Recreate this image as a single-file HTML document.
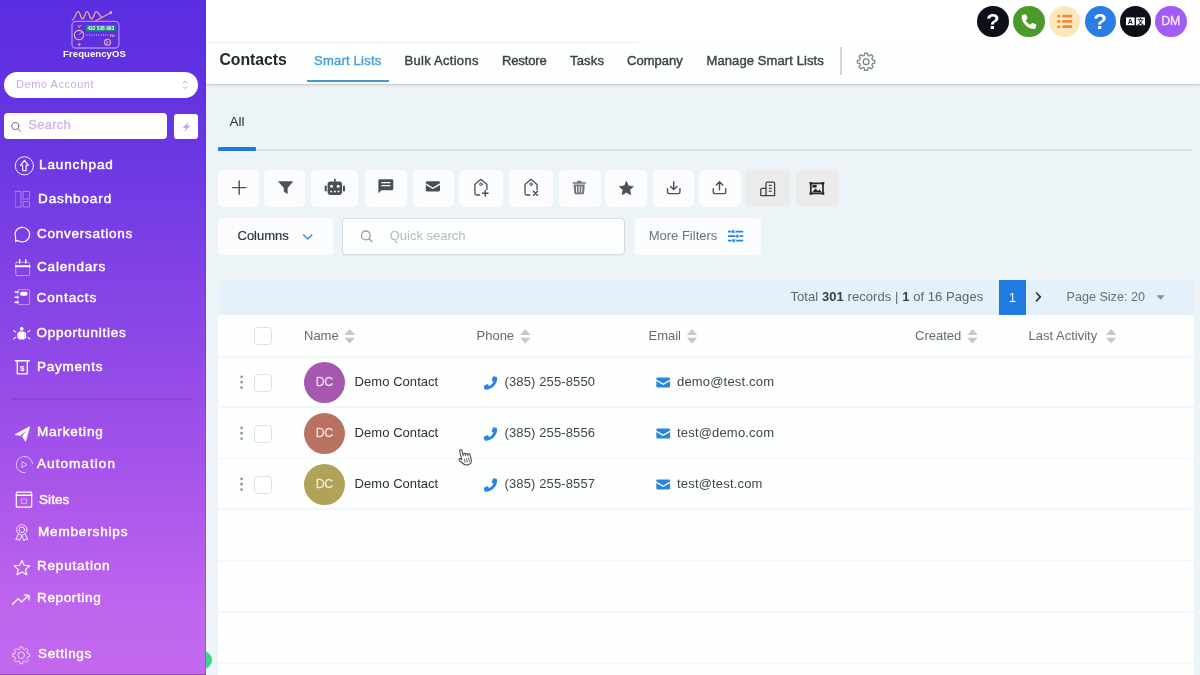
<!DOCTYPE html>
<html lang="en">
<head>
<meta charset="utf-8">
<title>Contacts - FrequencyOS</title>
<style>
*{box-sizing:border-box;margin:0;padding:0}
html,body{width:1200px;height:675px;overflow:hidden;background:#ecf4f7;font-family:"Liberation Sans",sans-serif;}
.abs{position:absolute}
#app{position:relative;width:1200px;height:675px;overflow:hidden;background:#ecf4f7;will-change:transform}
/* sidebar */
#side{position:absolute;left:0;top:0;width:206px;height:675px;background:linear-gradient(180deg,#5a2de0 0%,#6a37e2 22%,#8a46e6 48%,#a654ea 70%,#bf65ee 90%,#c368ee 100%);z-index:5}
#side .nav{position:absolute;color:#fff;font-weight:400;-webkit-text-stroke:.45px #fff;font-size:13.5px;letter-spacing:.35px;line-height:16px;white-space:nowrap}
#side svg{position:absolute;overflow:visible}
.pill{position:absolute;left:4px;top:72.3px;width:194px;height:26px;border-radius:13px;background:#fff}
.pill span{position:absolute;left:12px;top:4.8px;font-size:11px;line-height:14px;color:#c9a9f3;letter-spacing:.55px;font-weight:400}
.sbox{position:absolute;left:4px;top:113.3px;width:163px;height:26px;border-radius:4px;background:#fff}
.sbox span{position:absolute;left:24.3px;top:4.2px;font-size:13px;line-height:16px;color:#cdb0f2;letter-spacing:.25px;-webkit-text-stroke:.3px #cdb0f2}
.bolt{position:absolute;left:174px;top:114px;width:24px;height:25px;border-radius:3px;background:#fff}
/* top */
#top{position:absolute;left:206px;top:0;width:994px;height:43px;background:#fff}
.circ{position:absolute;top:5.5px;width:31.5px;height:31.5px;border-radius:50%}
#hdr{position:absolute;left:206px;top:43px;width:994px;height:40.8px;background:#fdfefe;box-shadow:0 1.5px 1.5px rgba(100,108,112,.2),0 3px 3px rgba(100,108,112,.06)}
#hdr .t{position:absolute;top:9.5px;font-size:13px;line-height:16px;font-weight:400;-webkit-text-stroke:.4px;color:#3c4149;white-space:nowrap}
/* content */
.btn{position:absolute;top:170.3px;height:37px;background:#fafcfd;border-radius:5px}
.btn svg{position:absolute;left:50%;top:50%}
#tbl{position:absolute;left:218px;top:315px;width:976px;height:360px;background:#fdfefe;border-radius:4px 4px 0 0}
.sep{position:absolute;left:0;width:976px;height:1.5px;background:#f3f6f7}
.th{position:absolute;top:13.1px;font-size:13px;line-height:16px;color:#666b72;white-space:nowrap}
.cb{position:absolute;width:18px;height:18px;border:1.5px solid #dde1e5;border-radius:4px;background:#fff}
.av{position:absolute;width:41px;height:41px;border-radius:50%;color:rgba(255,255,255,.74);-webkit-text-stroke:.3px rgba(255,255,255,.5);font-size:12.4px;line-height:41.5px;text-align:center;letter-spacing:-.3px;text-indent:-.3px}
.td{position:absolute;font-size:13px;line-height:16px;color:#2b2f36;white-space:nowrap}
</style>
</head>
<body>
<div id="app">

<!-- SIDEBAR -->
<div id="side">
  <div class="abs" style="left:63px;top:48px;width:63px;text-align:center;font-size:9.5px;font-weight:700;color:#fff;line-height:12px;letter-spacing:.1px">FrequencyOS</div>
  <div class="pill"><span>Demo Account</span></div>
  <div class="sbox"><span>Search</span></div>
  <div class="bolt"></div>

<svg class="abs" style="left:0;top:0" width="206" height="675" viewBox="0 0 206 675" fill="none" stroke="#fff" stroke-width="1.1" stroke-linecap="round" stroke-linejoin="round">
  <!-- logo -->
  <g stroke="#eeaa94" stroke-width="1.25">
    <path d="M72.300 19.900 C74.500 19.900 76 11.700 78.200 11.700 C80.400 11.700 80.400 18.900 82.600 18.900 C84.800 18.900 84.800 11.700 87 11.700 C89.200 11.700 89.500 18.900 91.700 18.900 C93.900 18.900 94.100 11.700 96.300 11.700 C98.300 11.700 99.500 15 101.400 17.200"/>
    <path d="M95.500 21 L110.600 12.700" stroke-width="1.150"/>
    <circle cx="110.800" cy="12.600" r=".9" fill="#eeaa94"/>
  </g>
  <rect x="72" y="21.400" width="46.900" height="26.600" rx="3.600" stroke="#a68dff" stroke-width="1.300"/>
  <rect x="86" y="25.100" width="29.600" height="6.100" rx=".6" fill="#1c8b80" stroke="none"/>
  <text x="100.800" y="30" font-family="Liberation Sans,sans-serif" font-size="4.800" font-weight="700" fill="#e9fff8" stroke="none" text-anchor="middle">432 528 963</text>
  <circle cx="79" cy="35" r="4.700" stroke="#edb6ae" stroke-width="1.150"/>
  <path d="M79.400 34.600 L82 32" stroke="#edb6ae" stroke-width="1"/>
  <path d="M78.200 25.400 L79.400 27.800 L80.600 25.400" stroke="#eeaa94" stroke-width=".9"/>
  <path d="M86.600 35 h21.600" stroke="#cbb2ff" stroke-width="1.500" stroke-dasharray=".8 1.550" stroke-linecap="butt"/>
  <text x="109.700" y="37.100" font-family="Liberation Sans,sans-serif" font-size="4.300" font-weight="700" fill="#eeaa94" stroke="none">Hz</text>
  <circle cx="107.500" cy="42.200" r="3" stroke="#edb6ae" stroke-width="1.050"/>
  <path d="M107.500 42.200 L105.900 40.300 M107.500 42.200 L106.300 44.300" stroke="#edb6ae" stroke-width=".9"/>
  <path d="M79.300 43.300 V45.700 M78.100 44.500 H80.500" stroke="#eeaa94" stroke-width=".9"/>

  <!-- pill chevrons -->
  <path d="M183 83 L185 81 L187 83 M183 86.6 L185 88.6 L187 86.6" stroke="#c9a9f3" stroke-width="1"/>
  <!-- search icon -->
  <circle cx="15.3" cy="126" r="3.6" stroke="#6f7278" stroke-width="1"/>
  <path d="M18 128.8 L20.6 131.4" stroke="#6f7278" stroke-width="1"/>
  <!-- bolt -->
  <path d="M188.8 121.7 L182.5 127.7 L186 127.7 L184 131.8 L190.5 125.8 L187 125.8 Z" fill="#bb9ef3" stroke="none"/>

  <!-- launchpad -->
  <circle cx="24.4" cy="165.8" r="9.1" stroke-width="1" opacity=".92"/>
  <path d="M24.4 160.3 L20.4 165.3 L22.7 165.3 L22.7 170.8 L26.1 170.8 L26.1 165.3 L28.4 165.3 Z" stroke-width="1.1"/>
  <!-- dashboard -->
  <g opacity=".38" stroke-width="1">
    <rect x="15.5" y="191.5" width="5.5" height="15.5"/>
    <rect x="23.5" y="191.5" width="6" height="7.5"/>
    <rect x="23.5" y="201.5" width="6" height="5.5"/>
  </g>
  <!-- conversations -->
  <path d="M16.6 240.6 L15.6 241.6 L15.6 237.6 A7.3 7.3 0 1 1 18.6 240.9 Z" stroke-width="1.2"/>
  <!-- calendars -->
  <rect x="15.8" y="262.3" width="13.8" height="13.3" rx="1" stroke-width="1" opacity=".5"/>
  <path d="M15.8 266.2 H29.6" stroke-width="1.9"/>
  <path d="M19.6 259.8 V263 M25.8 259.8 V263" stroke-width="1.4"/>
  <!-- contacts -->
  <rect x="17.8" y="289.6" width="11.8" height="15" rx="1.3" stroke-width="1" opacity=".45"/>
  <path d="M15.2 292 H18.2 M15.2 297.2 H18.2 M15.2 302.4 H18.2" stroke-width="1.6"/>
  <rect x="20" y="291.8" width="7.6" height="4" rx="1.8" fill="#fff" stroke="none"/>
  <!-- opportunities -->
  <g stroke="none" fill="#fff">
    <circle cx="21.7" cy="328.800" r="1.9"/>
    <path d="M18.800 331.500 H24.600 V339.400 H18.800 Z"/>
    <path d="M17.300 333 L18.800 332 V338.600 L17.300 338 Z M26.100 333 L24.600 332 V338.600 L26.100 338 Z"/>
  </g>
  <path d="M13.6 330.6 L15.6 332 M29.8 330.6 L27.8 332 M13.6 338.8 L15.6 337.4 M29.800 338.800 L27.800 337.400" stroke-width="1.2" opacity=".85"/>
  <!-- payments -->
  <path d="M15.2 360.8 H29.2" stroke-width="1.5"/>
  <path d="M17.3 361 V373.8 H27.3 V361" stroke-width="1.3"/>
  <text x="22.3" y="370.8" font-family="Liberation Sans,sans-serif" font-size="8" font-weight="700" fill="#fff" stroke="none" text-anchor="middle">$</text>
  <!-- marketing -->
  <path d="M15.2 434.4 L29.8 426.6 L25.6 441.4 L22.4 436.6 L27 429.8 L20.2 435.6 Z" fill="#fff" stroke="#fff" stroke-width=".6"/>
  <!-- automation -->
  <path d="M32.6 463.8 A8.2 8.2 0 1 0 25.2 472.8" stroke-width="1" opacity=".65"/>
  <path d="M22.3 461.8 L27 464.6 L22.3 467.4 Z" stroke-width=".9" opacity=".7"/>
  <!-- sites -->
  <rect x="16.3" y="492.2" width="15.4" height="15" rx=".8" stroke-width="1.2"/>
  <path d="M16.3 495.2 H31.7" stroke-width="1.4"/>
  <rect x="21.8" y="499" width="4.6" height="4.6" stroke-width=".9" opacity=".55"/>
  <!-- memberships -->
  <circle cx="21.8" cy="529.8" r="5.2" stroke-width="1" opacity=".8"/>
  <circle cx="21.8" cy="529.8" r="2.8" stroke-width="1" opacity=".9"/>
  <path d="M18.4 534 L15.8 539.6 L18.3 539 L19.6 541 L21.8 535.4 L24 541 L25.3 539 L27.8 539.6 L25.2 534" stroke-width="1" opacity=".85"/>
  <!-- reputation -->
  <path d="M21.9 560.2 L24.1 565.3 L29.7 565.8 L25.5 569.5 L26.8 574.8 L21.9 572 L17 574.8 L18.3 569.5 L14.1 565.8 L19.7 565.3 Z" stroke-width="1.1"/>
  <!-- reporting -->
  <path d="M12.4 604.2 L18.2 598.8 L21.6 602 L28.6 595.6 M24.4 595.2 H29 V599.8" stroke-width="1.3"/>
  <!-- settings -->
  <g opacity=".72" stroke-width="1">
    <path transform="translate(21.2 655.3)" d="M-1.59 -6.41 L-1.41 -8.48 L1.41 -8.48 L1.59 -6.41 L3.40 -5.65 L5.00 -7.00 L7.00 -5.00 L5.65 -3.40 L6.41 -1.59 L8.48 -1.41 L8.48 1.41 L6.41 1.59 L5.65 3.40 L7.00 5.00 L5.00 7.00 L3.40 5.65 L1.59 6.41 L1.41 8.48 L-1.41 8.48 L-1.59 6.41 L-3.40 5.65 L-5.00 7.00 L-7.00 5.00 L-5.65 3.40 L-6.41 1.59 L-8.48 1.41 L-8.48 -1.41 L-6.41 -1.59 L-5.65 -3.40 L-7.00 -5.00 L-5.00 -7.00 L-3.40 -5.65Z"/>
    <circle cx="21.2" cy="655.3" r="3.3"/>
  </g>
</svg>

  <div class="nav" style="left:39px;top:156.8px;letter-spacing:0.88px">Launchpad</div>
  <div class="nav" style="left:38px;top:190.6px;letter-spacing:0.89px">Dashboard</div>
  <div class="nav" style="left:37px;top:225.9px;letter-spacing:0.75px">Conversations</div>
  <div class="nav" style="left:37px;top:258.8px;letter-spacing:0.83px">Calendars</div>
  <div class="nav" style="left:36.5px;top:289.9px;letter-spacing:0.92px">Contacts</div>
  <div class="nav" style="left:36.5px;top:325.4px;letter-spacing:0.75px">Opportunities</div>
  <div class="nav" style="left:37px;top:358.6px;letter-spacing:0.77px">Payments</div>
  <div class="abs" style="left:11px;top:398px;width:181px;height:1.5px;background:rgba(60,20,120,.14)"></div>
  <div class="nav" style="left:37px;top:423.6px;letter-spacing:0.81px">Marketing</div>
  <div class="nav" style="left:37px;top:455.6px;letter-spacing:1.07px">Automation</div>
  <div class="nav" style="left:39px;top:491.5px;letter-spacing:0.07px">Sites</div>
  <div class="nav" style="left:38px;top:523.6px;letter-spacing:0.84px">Memberships</div>
  <div class="nav" style="left:37px;top:557.9px;letter-spacing:0.80px">Reputation</div>
  <div class="nav" style="left:37px;top:590.3px;letter-spacing:0.64px">Reporting</div>
  <div class="nav" style="left:38px;top:646.2px;letter-spacing:0.63px">Settings</div>
  <div class="abs" style="left:0;top:673.5px;width:206px;height:1.5px;background:rgba(110,35,130,.5)"></div>
  <div class="abs" style="left:204.5px;top:0;width:1.5px;height:675px;background:rgba(70,40,140,.28)"></div>
</div>
<div class="abs" style="left:193.6px;top:650.8px;width:18.6px;height:18.6px;border-radius:50%;background:#3dd389;z-index:4"></div>

<!-- TOP BAR -->
<div id="top">
  <div class="circ" style="left:771px;background:#0c1018"></div>
  <div class="circ" style="left:807px;background:#4b9a2c"></div>
  <div class="circ" style="left:842.5px;background:#fae8bb"></div>
  <div class="circ" style="left:878.5px;background:#2a7de4"></div>
  <div class="circ" style="left:913.5px;background:#0c1018"></div>
  <div class="circ" style="left:949px;background:#a35bf5;color:#f5eaff;font-size:12.4px;line-height:31.8px;text-align:center;-webkit-text-stroke:.3px #f5eaff;letter-spacing:-.2px">DM</div>
</div>

<!-- HEADER NAV -->
<div class="abs" style="left:206px;top:42px;width:433px;height:1px;background:#eef0f1;z-index:2"></div>
<div id="hdr">
  <div class="t" style="left:13.5px;top:7px;font-size:15.8px;line-height:20px;color:#24282e;letter-spacing:-.05px;font-weight:700;-webkit-text-stroke:0">Contacts</div>
  <div class="t" style="left:108px;letter-spacing:0.22px;color:#4a9fd8">Smart Lists</div>
  <div class="abs" style="left:101px;top:37.3px;width:82px;height:2px;background:#3d9bd4"></div>
  <div class="t" style="left:198.5px;letter-spacing:0.28px">Bulk Actions</div>
  <div class="t" style="left:296px;letter-spacing:-0.14px">Restore</div>
  <div class="t" style="left:364px;letter-spacing:0.17px">Tasks</div>
  <div class="t" style="left:421px;letter-spacing:0.01px">Company</div>
  <div class="t" style="left:500.5px;letter-spacing:0.10px">Manage Smart Lists</div>
  <div class="abs" style="left:634px;top:4px;width:1.5px;height:28px;background:#d3d7da"></div>
</div>

<!-- TABS -->
<div class="abs" style="left:229.5px;top:114px;font-size:13.5px;line-height:16px;color:#2b2f36">All</div>
<div class="abs" style="left:256px;top:149px;width:936px;height:1.5px;background:#d9e1e5"></div>
<div class="abs" style="left:218px;top:146.5px;width:38px;height:4px;background:#1f7ade;border-radius:1px"></div>

<!-- TOOLBAR -->
<div class="btn" style="left:218px;width:41px"></div>
<div class="btn" style="left:264px;width:41px"></div>
<div class="btn" style="left:311px;width:47px"></div>
<div class="btn" style="left:365px;width:42px"></div>
<div class="btn" style="left:412.5px;width:41px"></div>
<div class="btn" style="left:459px;width:44px"></div>
<div class="btn" style="left:509px;width:44px"></div>
<div class="btn" style="left:558.5px;width:42px"></div>
<div class="btn" style="left:605px;width:42px"></div>
<div class="btn" style="left:652.5px;width:41.5px"></div>
<div class="btn" style="left:699px;width:41.5px"></div>
<div class="btn" style="left:745px;width:45px;background:#ebebec"></div>
<div class="btn" style="left:796px;width:43px;background:#ebebec"></div>

<!-- FILTER ROW -->
<div class="abs" style="left:218px;top:218px;width:115px;height:37px;background:#fafcfd;border-radius:4px">
  <div class="abs" style="left:19.5px;top:10.3px;font-size:13px;line-height:16px;color:#2f343b;-webkit-text-stroke:.2px #2f343b">Columns</div>
</div>
<div class="abs" style="left:342px;top:218px;width:283px;height:37px;background:#fdfefe;border:1px solid #d5dbdf;border-radius:4px;box-shadow:0 1px 2px rgba(0,0,0,.05)">
  <div class="abs" style="left:46.7px;top:9.3px;font-size:13px;line-height:16px;color:#b4babf">Quick search</div>
</div>
<div class="abs" style="left:634.5px;top:218px;width:126.5px;height:37px;background:#fafcfd;border-radius:4px">
  <div class="abs" style="left:14.2px;top:10.3px;font-size:13px;line-height:16px;color:#6c727a">More Filters</div>
</div>

<!-- PAGINATION -->
<div class="abs" style="left:219px;top:280px;width:975px;height:36px;background:#e4f0fa"></div>
<div class="abs" style="left:790.4px;top:288.8px;font-size:13px;line-height:16px;color:#5f6670;white-space:nowrap;letter-spacing:.07px">Total <b style="color:#3a4048">301</b> records | <b style="color:#3a4048">1</b> of 16 Pages</div>
<div class="abs" style="left:999px;top:279.5px;width:26.5px;height:35px;background:#1f7be0;color:#fff;font-size:13px;line-height:35px;text-align:center">1</div>
<div class="abs" style="left:1066.5px;top:289px;font-size:12.6px;line-height:16px;color:#6a7079;white-space:nowrap">Page Size: 20</div>

<!-- TABLE -->
<div id="tbl">
  <div class="sep" style="top:41px"></div>
  <div class="sep" style="top:91px"></div>
  <div class="sep" style="top:142.5px"></div>
  <div class="sep" style="top:193.3px"></div>
  <div class="sep" style="top:244.8px"></div>
  <div class="sep" style="top:296.3px"></div>
  <div class="sep" style="top:347.5px"></div>

  <div class="cb" style="left:36px;top:12px"></div>
  <div class="th" style="left:86px">Name</div>
  <div class="th" style="left:258.5px">Phone</div>
  <div class="th" style="left:430.5px">Email</div>
  <div class="th" style="left:697px">Created</div>
  <div class="th" style="left:810.5px">Last Activity</div>

  <div class="cb" style="left:36px;top:58.5px"></div>
  <div class="av" style="left:86px;top:46.5px;background:#a658b1">DC</div>
  <div class="td" style="left:136.6px;top:59.2px;letter-spacing:.05px">Demo Contact</div>
  <div class="td" style="left:286.5px;top:59.2px;letter-spacing:.12px;color:#41464e">(385) 255-8550</div>
  <div class="td" style="left:459px;top:59.2px;letter-spacing:.18px;color:#41464e">demo@test.com</div>

  <div class="cb" style="left:36px;top:109.5px"></div>
  <div class="av" style="left:86px;top:97.8px;background:#b8725f">DC</div>
  <div class="td" style="left:136.6px;top:110.2px;letter-spacing:.05px">Demo Contact</div>
  <div class="td" style="left:286.5px;top:110.2px;letter-spacing:.12px;color:#41464e">(385) 255-8556</div>
  <div class="td" style="left:459px;top:110.2px;letter-spacing:.18px;color:#41464e">test@demo.com</div>

  <div class="cb" style="left:36px;top:160.5px"></div>
  <div class="av" style="left:86px;top:148.8px;background:#b0a358">DC</div>
  <div class="td" style="left:136.6px;top:161.2px;letter-spacing:.05px">Demo Contact</div>
  <div class="td" style="left:286.5px;top:161.2px;letter-spacing:.12px;color:#41464e">(385) 255-8557</div>
  <div class="td" style="left:459px;top:161.2px;letter-spacing:.18px;color:#41464e">test@test.com</div>
</div>

<svg class="abs" style="left:0;top:0;z-index:6;pointer-events:none" width="1200" height="675" viewBox="0 0 1200 675" fill="none" stroke-linecap="round" stroke-linejoin="round">
  <!-- top bar icons -->
  <text x="992.9" y="29.2" font-family="Liberation Sans,sans-serif" font-size="22.5" font-weight="700" fill="#fff" text-anchor="middle">?</text>
  <text x="1100" y="29.4" font-family="Liberation Sans,sans-serif" font-size="22.5" font-weight="700" fill="#fff" text-anchor="middle">?</text>
  <!-- phone -->
  <path transform="translate(1021.6 14.2) scale(.0288)" fill="#fff" d="M164.9 24.6c-7.700-18.600-28-28.500-47.400-23.200l-88 24C12.100 30.200 0 46 0 64C0 311.400 200.600 512 448 512c18 0 33.800-12.100 38.600-29.500l24-88c5.300-19.400-4.600-39.700-23.200-47.400l-96-40c-16.300-6.800-35.200-2.100-46.300 11.600L304.700 368C234.300 334.700 177.300 277.700 144 207.300L193.300 167c13.700-11.200 18.400-30 11.600-46.300l-40-96z"/>
  <!-- list -->
  <g fill="#f38a3f">
    <circle cx="1058.8" cy="16.1" r="1.55"/><circle cx="1058.800" cy="21.4" r="1.55"/><circle cx="1058.800" cy="26.7" r="1.55"/>
    <rect x="1062.300" y="14.8" width="9.800" height="2.7" rx=".4"/><rect x="1062.300" y="20.05" width="9.800" height="2.7" rx=".4"/><rect x="1062.300" y="25.35" width="9.800" height="2.7" rx=".4"/>
  </g>
  <!-- translate -->
  <rect x="1126" y="17.4" width="8.600" height="7.800" fill="#fff"/>
  <rect x="1136" y="17.4" width="9" height="7.800" fill="#fff"/>
  <text x="1130.300" y="24" font-family="Liberation Sans,sans-serif" font-size="7" font-weight="700" fill="#0c1018" text-anchor="middle">A</text>
  <text x="1140.500" y="23.8" font-family="Liberation Sans,'Noto Sans CJK SC',sans-serif" font-size="6.500" font-weight="700" fill="#0c1018" text-anchor="middle">文</text>

  <!-- header gear -->
  <g stroke="#7d8288" stroke-width="1.25">
    <path transform="translate(866.1 61.7)" d="M-1.62 -6.50 L-1.38 -8.69 L1.38 -8.69 L1.62 -6.50 L3.46 -5.74 L5.17 -7.12 L7.12 -5.17 L5.74 -3.46 L6.50 -1.62 L8.69 -1.38 L8.69 1.38 L6.50 1.62 L5.74 3.46 L7.12 5.17 L5.17 7.12 L3.46 5.74 L1.62 6.50 L1.38 8.69 L-1.38 8.69 L-1.62 6.50 L-3.46 5.74 L-5.17 7.12 L-7.12 5.17 L-5.74 3.46 L-6.50 1.62 L-8.69 1.38 L-8.69 -1.38 L-6.50 -1.62 L-5.74 -3.46 L-7.12 -5.17 L-5.17 -7.12 L-3.46 -5.74Z"/>
    <circle cx="866.1" cy="61.7" r="2.9"/>
  </g>

  <!-- toolbar icons -->
  <g fill="#4a4f55" stroke="none">
    <!-- plus -->
    <path d="M239.2 181 V194.2 M232.600 187.6 H245.800" stroke="#4a4f55" stroke-width="1.4" fill="none"/>
    <!-- filter -->
    <path d="M278.900 181.700 H292.500 L287.200 188.100 V193.400 L284.200 191.400 V188.100 Z" stroke="#4a4f55" stroke-width=".8"/>
    <!-- robot -->
    <path d="M334 178.800 h1.700 v3 h-1.700 z"/>
    <rect x="327.600" y="181.600" width="14.500" height="13.300" rx="2.800"/>
    <rect x="324.700" y="185.400" width="2" height="6" rx=".9"/>
    <rect x="343" y="185.400" width="2" height="6" rx=".9"/>
    <circle cx="331.500" cy="186.300" r="1.500" fill="#fafcfd"/>
    <circle cx="338.200" cy="186.300" r="1.500" fill="#fafcfd"/>
    <path d="M330.300 190.700 h1.800 v1.500 h-1.800 z M333.900 190.700 h1.900 v1.500 h-1.900 z M337.600 190.700 h1.800 v1.500 h-1.800 z" fill="#fafcfd"/>
    <!-- chat -->
    <path d="M379.800 179.300 H391.900 A1.400 1.400 0 0 1 393.300 180.700 V188.800 A1.400 1.400 0 0 1 391.900 190.200 H381.300 L378.400 193.200 V180.700 A1.400 1.400 0 0 1 379.800 179.300 Z"/>
    <path d="M381.300 182.700 H390.400 M381.300 185.700 H390.400" stroke="#fafcfd" stroke-width="1.300" stroke-linecap="butt"/>
    <!-- mail -->
    <path d="M427.200 181.200 H438.600 A1.400 1.400 0 0 1 440 182.600 V183.200 L432.900 187.400 L425.800 183.200 V182.600 A1.400 1.400 0 0 1 427.200 181.200 Z M425.800 184.900 L432.900 189.100 L440 184.900 V190 A1.400 1.400 0 0 1 438.600 191.400 H427.200 A1.400 1.400 0 0 1 425.800 190 Z"/>
  </g>
  <!-- tag plus -->
  <g stroke="#4a4f55" stroke-width="1.300" fill="none">
    <path d="M479.600 195 H476.400 A1.500 1.500 0 0 1 474.900 193.500 V184.400 L480.900 179.300 L486.900 184.400 V189.400"/>
    <circle cx="480.900" cy="184.200" r="1.300" stroke-width="1"/>
    <path d="M485.300 190.600 V196 M482.600 193.300 H488" stroke-width="1.500"/>
    <!-- tag x -->
    <path d="M529.700 195 H526.500 A1.500 1.500 0 0 1 525 193.500 V184.400 L531 179.300 L537 184.400 V189.400"/>
    <circle cx="531" cy="184.200" r="1.300" stroke-width="1"/>
    <path d="M533.600 191.400 L537.400 195.200 M537.400 191.400 L533.600 195.200" stroke-width="1.500"/>
  </g>
  <!-- trash -->
  <g fill="#70767c" stroke="none">
    <path d="M572.600 182.200 H585.800 V183.800 H572.600 Z M577 180.800 H581.400 V182.200 H577 Z"/>
    <path d="M573.600 184.600 H584.800 L584.100 193 A1.300 1.300 0 0 1 582.800 194.200 H575.600 A1.300 1.300 0 0 1 574.300 193 Z"/>
    <path d="M576.600 186.200 V192.600 M579.200 186.200 V192.600 M581.800 186.200 V192.600" stroke="#fafcfd" stroke-width="1" stroke-linecap="butt"/>
  </g>
  <!-- star -->
  <path transform="translate(626.400 188.800)" d="M0.000 -7.200 L2.050 -2.800 L6.900 -2.250 L3.300 1.050 L4.250 5.850 L0.000 3.450 L-4.250 5.850 L-3.300 1.050 L-6.900 -2.250 L-2.050 -2.800Z" fill="#4a4f55" stroke="#4a4f55" stroke-width=".8"/>
  <!-- download / upload -->
  <g stroke="#4a4f55" stroke-width="1.400" fill="none">
    <path d="M667.500 188.600 V192 A1.600 1.600 0 0 0 669.100 193.600 H678.300 A1.600 1.600 0 0 0 679.900 192 V188.600"/>
    <path d="M673.700 181.600 V189.400 M670.500 186.400 L673.700 189.600 L676.900 186.400"/>
    <path d="M713.300 188.600 V192 A1.600 1.600 0 0 0 714.900 193.600 H724.100 A1.600 1.600 0 0 0 725.700 192 V188.600"/>
    <path d="M719.500 189.800 V182 M716.300 185 L719.500 181.800 L722.700 185"/>
  </g>
  <!-- building -->
  <g stroke="#3f4449" stroke-width="1.300" fill="none">
    <path d="M766 195.600 V183.400 A1.200 1.200 0 0 1 767.200 182.200 H773.400 A1.200 1.200 0 0 1 774.600 183.400 V195.600 Z"/>
    <path d="M766 188.400 H762 A1.200 1.200 0 0 0 760.800 189.600 V195.600 H766"/>
    <path d="M769.300 185.400 H771.300 M769.300 188.300 H771.300 M769.300 191.200 H771.300" stroke-width="1.200"/>
  </g>
  <!-- image -->
  <g>
    <rect x="810.800" y="183.300" width="12.200" height="10.200" stroke="#24282c" stroke-width="1.700" fill="none"/>
    <path d="M812 192.500 L815.500 188.400 L818 191 L819.600 189.600 L822 192.500 Z" fill="#24282c"/>
    <rect x="812.400" y="184.800" width="4.200" height="2.800" fill="#24282c"/>
    <g fill="#24282c"><rect x="809.500" y="182" width="2.600" height="2.600" rx=".5"/><rect x="821.700" y="182" width="2.600" height="2.600" rx=".5"/><rect x="809.500" y="192.200" width="2.600" height="2.600" rx=".5"/><rect x="821.700" y="192.200" width="2.600" height="2.600" rx=".5"/></g>
  </g>

  <!-- columns chevron -->
  <path d="M303.600 235 L307.700 239 L311.800 235" stroke="#3f90d6" stroke-width="1.500"/>
  <!-- quick search icon -->
  <circle cx="365.800" cy="235.400" r="4.400" stroke="#979da3" stroke-width="1.300"/>
  <path d="M369 238.700 L372 241.700" stroke="#979da3" stroke-width="1.300"/>
  <!-- more filters icon -->
  <g stroke="#2a82e0" stroke-width="1.700" stroke-linecap="butt">
    <path d="M728 231.600 H743.200 M728 236.100 H743.200 M728 240.600 H743.200"/>
  </g>
  <g fill="#2a82e0" stroke="#fafcfd" stroke-width=".7">
    <circle cx="733.200" cy="231.600" r="1.900"/><circle cx="737.400" cy="236.100" r="1.900"/><circle cx="733.800" cy="240.600" r="1.900"/>
  </g>

  <!-- pagination -->
  <path d="M1036.500 293 L1040.300 296.900 L1036.500 300.800" stroke="#30353b" stroke-width="1.700"/>
  <path d="M1156.400 295.200 H1164.800 L1160.600 299.800 Z" fill="#8b9198"/>

  <!-- sort icons -->
  <g fill="#c6c8ca">
    <g><path d="M344.400 334.900 L349.700 329 L355 334.900 Z M344.400 337.700 L349.700 343.600 L355 337.700 Z"/></g>
    <g transform="translate(175.600 0)"><path d="M344.400 334.900 L349.700 329 L355 334.900 Z M344.400 337.700 L349.700 343.600 L355 337.700 Z"/></g>
    <g transform="translate(342.300 0)"><path d="M344.400 334.900 L349.700 329 L355 334.900 Z M344.400 337.700 L349.700 343.600 L355 337.700 Z"/></g>
    <g transform="translate(622.800 0)"><path d="M344.400 334.900 L349.700 329 L355 334.900 Z M344.400 337.700 L349.700 343.600 L355 337.700 Z"/></g>
    <g transform="translate(761.400 0)"><path d="M344.400 334.900 L349.700 329 L355 334.900 Z M344.400 337.700 L349.700 343.600 L355 337.700 Z"/></g>
  </g>

  <!-- row icons -->
  <g>
    <g fill="#8f959b"><circle cx="241.600" cy="376.800" r="1.350"/><circle cx="241.600" cy="382.200" r="1.350"/><circle cx="241.600" cy="387.600" r="1.350"/></g>
    <path transform="translate(483.800 376.300) scale(.0262)" fill="#2b85df" d="M347.100 24.600c7.700-18.600 28-28.500 47.400-23.200l88 24C499.900 30.200 512 46 512 64c0 247.400-200.600 448-448 448c-18 0-33.800-12.100-38.600-29.500l-24-88c-5.300-19.400 4.600-39.700 23.200-47.400l96-40c16.300-6.800 35.200-2.100 46.300 11.600L207.300 368c70.400-33.300 127.400-90.300 160.700-160.700L318.700 167c-13.700-11.200-18.400-30-11.600-46.300l40-96z"/>
    <path fill="#2b85df" d="M657.600 377.600 H668.800 A1.300 1.300 0 0 1 670.100 378.900 V379.400 L663.200 383.400 L656.300 379.400 V378.900 A1.300 1.300 0 0 1 657.600 377.600 Z M656.300 381 L663.200 385 L670.100 381 V386.200 A1.300 1.300 0 0 1 668.800 387.500 H657.600 A1.300 1.300 0 0 1 656.300 386.200 Z"/>
  </g>
  <g transform="translate(0 51)">
    <g fill="#8f959b"><circle cx="241.600" cy="376.800" r="1.350"/><circle cx="241.600" cy="382.200" r="1.350"/><circle cx="241.600" cy="387.600" r="1.350"/></g>
    <path transform="translate(483.800 376.300) scale(.0262)" fill="#2b85df" d="M347.100 24.600c7.700-18.600 28-28.500 47.400-23.200l88 24C499.900 30.200 512 46 512 64c0 247.400-200.600 448-448 448c-18 0-33.800-12.100-38.600-29.500l-24-88c-5.300-19.400 4.600-39.700 23.200-47.400l96-40c16.300-6.800 35.200-2.100 46.300 11.600L207.300 368c70.400-33.300 127.400-90.300 160.700-160.700L318.700 167c-13.700-11.200-18.400-30-11.600-46.300l40-96z"/>
    <path fill="#2b85df" d="M657.600 377.600 H668.800 A1.300 1.300 0 0 1 670.100 378.900 V379.400 L663.200 383.400 L656.300 379.400 V378.900 A1.300 1.300 0 0 1 657.600 377.600 Z M656.300 381 L663.200 385 L670.100 381 V386.200 A1.300 1.300 0 0 1 668.800 387.500 H657.600 A1.300 1.300 0 0 1 656.300 386.200 Z"/>
  </g>
  <g transform="translate(0 102)">
    <g fill="#8f959b"><circle cx="241.600" cy="376.800" r="1.350"/><circle cx="241.600" cy="382.200" r="1.350"/><circle cx="241.600" cy="387.600" r="1.350"/></g>
    <path transform="translate(483.800 376.300) scale(.0262)" fill="#2b85df" d="M347.100 24.600c7.700-18.600 28-28.500 47.400-23.200l88 24C499.900 30.200 512 46 512 64c0 247.400-200.600 448-448 448c-18 0-33.800-12.100-38.600-29.500l-24-88c-5.300-19.400 4.600-39.700 23.200-47.400l96-40c16.300-6.800 35.200-2.100 46.300 11.600L207.300 368c70.400-33.300 127.400-90.300 160.700-160.700L318.700 167c-13.700-11.200-18.400-30-11.600-46.300l40-96z"/>
    <path fill="#2b85df" d="M657.600 377.600 H668.800 A1.300 1.300 0 0 1 670.100 378.900 V379.400 L663.200 383.400 L656.300 379.400 V378.900 A1.300 1.300 0 0 1 657.600 377.600 Z M656.300 381 L663.200 385 L670.100 381 V386.200 A1.300 1.300 0 0 1 668.800 387.500 H657.600 A1.300 1.300 0 0 1 656.300 386.200 Z"/>
  </g>

  <!-- cursor hand -->
  <g transform="translate(457.2 448) rotate(-14 7 9)" stroke="#4d4d4d" stroke-width="1.1" fill="#fff">
    <path d="M4 9.500 V2.200 A1.200 1.200 0 0 1 6.400 2.200 V7.400 V6.600 A1.150 1.150 0 0 1 8.700 6.600 V7.900 V7.300 A1.150 1.150 0 0 1 11 7.300 V8.600 V8.200 A1.100 1.100 0 0 1 13.200 8.200 V12.600 C13.200 15.600 11.800 17.400 9.200 17.400 H8 C6.200 17.400 5.200 16.600 4.200 15 L1.400 11 C.7 9.800 2.200 8.800 3.100 9.800 L4 10.900 Z"/>
    <path d="M6.600 11.200 V14.400 M8.800 11.200 V14.400 M11 11.200 V14.400" stroke-width=".8"/>
  </g>
</svg>

</div>
</body>
</html>
